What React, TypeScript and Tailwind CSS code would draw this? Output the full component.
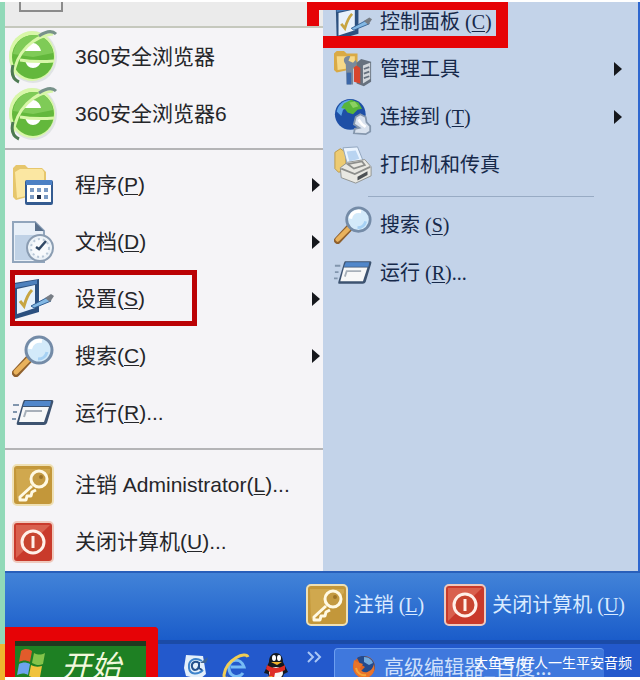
import React from 'react';

interface IconProps {
  className?: string;
}

interface MenuEntry {
  text: string;
  hotkey?: string;
  suffix?: string;
  icon: React.FC<IconProps>;
  submenu?: boolean;
  highlighted?: boolean;
}

const BrowserIcon: React.FC<IconProps> = ({ className }) => (
  <svg className={className} viewBox="0 0 50 56" aria-hidden="true">
    <ellipse cx="25" cy="28" rx="24" ry="26" fill="#dfe3e4" />
    <ellipse cx="24" cy="27" rx="23" ry="25" fill="#d8f7a8" />
    <ellipse cx="25" cy="28" rx="21" ry="22" fill="#63b83c" />
    <path d="M5 25C7 12 16 6 26 6c10 0 18 8 19 18L25 28z" fill="#7fcb57" />
    <path d="M16 22c2-5 6-8 9-8s7 3 8 8z" fill="#fff" />
    <path d="M17 31h17c-2 5-5 8-9 8s-7-3-8-8z" fill="#fff" />
    <path d="M12 31c12 2 22 2 34 1" fill="none" stroke="#d8f7a8" strokeWidth="3" />
    <path d="M45 5C26 7 8 22 5 48" fill="none" stroke="#d8f7a8" strokeWidth="3" />
    <path d="M31 7c6-4 13-6 17-2" fill="none" stroke="#78928a" strokeWidth="3" />
    <path d="M5 36c-2 8-1 14 6 17" fill="none" stroke="#4d7a52" strokeWidth="3" />
  </svg>
);

const ProgramsIcon: React.FC<IconProps> = ({ className }) => (
  <svg className={className} viewBox="0 0 42 42" aria-hidden="true">
    <path d="M1 4l3-3h9l3 3h14l4 4v20l-30 8-3-3z" fill="#e6c66c" />
    <path d="M3 8l5-3h22l2 3v20L5 34z" fill="#fbe7a2" />
    <rect x="13" y="16" width="28" height="25" rx="2" fill="#345b91" />
    <rect x="15" y="21" width="24" height="17" fill="#fff" />
    <rect x="14" y="16" width="26" height="5" fill="#4c80c4" />
    <path d="M18 24h4v4h-4zM25 24h4v4h-4zM32 24h4v4h-4zM18 31h4v4h-4zM32 31h4v4h-4z" fill="#7b9bc4" />
    <path d="M25 31h4v4h-4z" fill="#1c2c48" />
  </svg>
);

const DocumentsIcon: React.FC<IconProps> = ({ className }) => (
  <svg className={className} viewBox="0 0 42 42" aria-hidden="true">
    <path d="M1 1h22l9 9v31H1z" fill="#e9f0f8" stroke="#91a5bc" strokeWidth="2" />
    <path d="M3 14h27v25H3z" fill="#c0d2e6" />
    <path d="M23 1v9h9z" fill="#59708c" />
    <circle cx="28" cy="27" r="13" fill="#edf3f8" stroke="#8b9db2" strokeWidth="2" />
    <circle cx="28" cy="27" r="9" fill="#f8fafc" stroke="#b9c8d7" strokeDasharray="2 3" strokeWidth="2" />
    <path d="M34 20l-7 8-3-2" fill="none" stroke="#314966" strokeWidth="2.5" />
  </svg>
);

const SettingsIcon: React.FC<IconProps> = ({ className }) => (
  <svg className={className} viewBox="0 0 42 42" aria-hidden="true">
    <path d="M2 5L27 1v33L3 41z" fill="#2c507f" />
    <path d="M3 6l22-4v4L3 10z" fill="#4d80bd" />
    <path d="M5 11l18-4v23L5 36z" fill="#e7f1fc" />
    <path d="M8 23l4 5c2-7 4-12 8-16" fill="none" stroke="#c7a542" strokeWidth="3" />
    <path d="M19 28l17-9 3 4-17 7z" fill="#83b8e4" stroke="#315f94" />
    <path d="M33 20l6-4 3 2-4 6z" fill="#777d85" />
  </svg>
);

const SearchIcon: React.FC<IconProps> = ({ className }) => (
  <svg className={className} viewBox="0 0 42 42" aria-hidden="true">
    <path d="M4 38l13-14" stroke="#8f602d" strokeWidth="8" strokeLinecap="round" />
    <path d="M4 37l12-12" stroke="#e9b25c" strokeWidth="5" strokeLinecap="round" />
    <circle cx="27" cy="15" r="13" fill="#d3eafa" stroke="#748ba7" strokeWidth="3" />
    <path d="M18 14c1-6 6-9 12-8" fill="none" stroke="#fff" strokeWidth="4" />
    <path d="M35 17c-1 4-4 7-9 7" fill="none" stroke="#a6d1f4" strokeWidth="3" />
  </svg>
);

const RunIcon: React.FC<IconProps> = ({ className }) => (
  <svg className={className} viewBox="0 0 42 42" aria-hidden="true">
    <path d="M12 8h28q2 0 1 3l-6 20q-1 2-3 2H6q-2 0-1-3l6-20z" fill="#3d5370" />
    <path d="M13 9h26l-1 5H11z" fill="#5187ca" />
    <path d="M11 15h26l-5 15H7z" fill="#f7f8f8" />
    <path d="M12 25l2-6h16" fill="none" stroke="#a7b0b9" strokeWidth="2" />
    <path d="M1 13h6M1 20h4M0 27h4" stroke="#8195ad" strokeWidth="2" />
  </svg>
);

const LogOffIcon: React.FC<IconProps> = ({ className }) => (
  <svg className={className} viewBox="0 0 42 42" aria-hidden="true">
    <rect x="1" y="1" width="40" height="40" rx="4" fill="#c3973a" stroke="#efe0b4" strokeWidth="2" />
    <path d="M4 5h34v4L5 35z" fill="#d8b45c" opacity="0.6" />
    <path d="M20 22L8 33v3h6l1-4h4l1-4 4-2" fill="#c3973a" stroke="#fff9e3" strokeWidth="3" strokeLinejoin="round" />
    <circle cx="27" cy="15" r="8" fill="#c39a42" stroke="#fff9e3" strokeWidth="3" />
    <circle cx="29" cy="13" r="2" fill="#9c7428" />
  </svg>
);

const PowerIcon: React.FC<IconProps> = ({ className }) => (
  <svg className={className} viewBox="0 0 42 42" aria-hidden="true">
    <rect x="1" y="1" width="40" height="40" rx="4" fill="#c93a2b" stroke="#efc9bd" strokeWidth="2" />
    <path d="M4 4h34L4 37z" fill="#e0705c" opacity="0.7" />
    <circle cx="21" cy="21" r="11" fill="#c8452f" stroke="#fff1e9" strokeWidth="3" />
    <path d="M21 15v12" stroke="#fff1e9" strokeWidth="3" />
  </svg>
);

const ToolsIcon: React.FC<IconProps> = ({ className }) => (
  <svg className={className} viewBox="0 0 42 42" aria-hidden="true">
    <path d="M0 4l3-3h8l3 3h12v16L3 25l-3-3z" fill="#d9aa45" />
    <path d="M3 7h20v12L4 22z" fill="#f6d989" />
    <path d="M13 16c-5-6 0-11 5-9l-2 5 5 2 3-3c3 5 0 8-3 9v18h-7z" fill="#79899c" />
    <path d="M14 25h5v13h-5z" fill="#3c67a8" />
    <path d="M25 14l5-4 11 3v22l-8 5-8-3z" fill="#66717e" />
    <path d="M32 17l8-3v18l-8 5z" fill="#d2d7dc" />
    <path d="M33 21l6-2M33 26l6-2M33 31l6-2" stroke="#66717e" strokeWidth="2" />
    <path d="M22 19l3-2 4 3v17l-7-2z" fill="#d8452d" />
  </svg>
);

const NetworkIcon: React.FC<IconProps> = ({ className }) => (
  <svg className={className} viewBox="0 0 42 42" aria-hidden="true">
    <circle cx="18" cy="18" r="17" fill="#1e4fa6" />
    <path d="M3 15C5 6 12 2 19 2l-2 8-7 3-2 7z" fill="#5ea4e6" />
    <path d="M11 6l8-4 8 3 4 7-5 1-5 5-6-2-3-4-4-1z" fill="#58b53a" />
    <path d="M17 5l6-1 4 5-6 2z" fill="#8bd162" />
    <path d="M24 21l5-3 6 3 1 6 4 4v6l-5 3-13-1 1-5 5-1-6-4z" fill="#d9e2ee" stroke="#8597ad" strokeWidth="2" />
    <path d="M27 24l4 5 4 3" fill="none" stroke="#fff" strokeWidth="3" />
  </svg>
);

const PrinterIcon: React.FC<IconProps> = ({ className }) => (
  <svg className={className} viewBox="0 0 42 42" aria-hidden="true">
    <path d="M1 7l6-4 6 4v20l-8 2-4-4z" fill="#edcb72" stroke="#b99645" />
    <path d="M10 2l16-1 6 15-17 5z" fill="#eaf4ff" stroke="#8da2bb" />
    <path d="M14 6l10-1 4 9-11 3z" fill="#b9d4f1" />
    <path d="M7 24l8-6 19-3 7 8v10l-17 8-16-6z" fill="#e9e8e2" stroke="#8d8e8b" />
    <path d="M8 25l15 6 17-8M15 20l16-3 3 4-12 4z" fill="none" stroke="#8d8e8b" strokeWidth="2" />
    <path d="M26 34l11-6v4l-11 6z" fill="#4d5154" />
  </svg>
);

const WindowsFlag: React.FC<IconProps> = ({ className }) => (
  <svg className={className} viewBox="0 0 30 30" aria-hidden="true">
    <path d="M4 3c4-3 8-2 11 0l-2 11c-4-2-7-2-11 0z" fill="#e25b2b" />
    <path d="M17 5c4 2 7 2 11 0l-2 11c-4 2-7 1-11-1z" fill="#84c44a" />
    <path d="M2 16c4-2 7-2 11 0l-2 11c-3-2-7-2-11 0z" fill="#6da4ef" />
    <path d="M14 17c4 2 7 2 11 1l-2 11c-4 1-7 1-11-1z" fill="#f0c33c" />
  </svg>
);

const MailIcon: React.FC<IconProps> = ({ className }) => (
  <svg className={className} viewBox="0 0 28 28" aria-hidden="true">
    <path d="M4 3l17 1 3 18-6 5-14-3-2-8z" fill="#e3effa" />
    <path d="M20 9c-8-5-14 0-13 7s9 7 14 2" fill="none" stroke="#3d83cb" strokeWidth="2" />
    <path d="M17 11c-4-3-8 0-7 4s6 4 7-1v-4 6l3 2" fill="none" stroke="#24518c" strokeWidth="2" />
    <path d="M18 11l8-6-2 6z" fill="#42658f" />
  </svg>
);

const ExplorerIcon: React.FC<IconProps> = ({ className }) => (
  <svg className={className} viewBox="0 0 28 28" aria-hidden="true">
    <path d="M21 21c-4 6-14 4-14-5s12-11 15-1H9" fill="none" stroke="#77bcf5" strokeWidth="3" />
    <path d="M26 5C24-1 4 7 2 23c0 3 1 4 4 3" fill="none" stroke="#f0cd55" strokeWidth="3" />
  </svg>
);

const PenguinIcon: React.FC<IconProps> = ({ className }) => (
  <svg className={className} viewBox="0 0 28 28" aria-hidden="true">
    <path d="M7 10C7-2 21-2 21 10l5 10-4 2-2 5H8l-2-5-4-1z" fill="#15191f" />
    <ellipse cx="14" cy="21" rx="7" ry="6" fill="#f7f7f4" />
    <ellipse cx="12" cy="6" rx="2" ry="3" fill="#fff" />
    <ellipse cx="17" cy="6" rx="2" ry="3" fill="#fff" />
    <path d="M9 10h11l-5 3z" fill="#f2b32c" />
    <path d="M5 13c6 4 12 4 18 0v5c-4 2-7 3-10 3l-1 5-5-1 1-5-4-3z" fill="#df2d26" />
    <path d="M4 25l6-1 3 4H5zM18 25l6 1v2h-8z" fill="#eeb32e" />
  </svg>
);

const FirefoxIcon: React.FC<IconProps> = ({ className }) => (
  <svg className={className} viewBox="0 0 24 24" aria-hidden="true">
    <circle cx="12" cy="12" r="11" fill="#df6422" />
    <path d="M5 3c7-5 17 0 18 8 0 4-2 7-4 8-4 2-9 1-10-3l4-4-5-3z" fill="#234a8c" />
    <path d="M12 2c5 0 8 3 9 6l-4 2-5-3z" fill="#72a9dc" />
    <path d="M2 5l3 2 6 2-3 4c1 5 7 5 9 3 3-1 4-4 5-7 2 8-3 14-10 14S0 17 2 5z" fill="#e9742b" />
    <path d="M4 13c1 5 5 8 10 7" fill="none" stroke="#f5a63c" strokeWidth="2" />
  </svg>
);

const Arrow: React.FC = () => (
  <svg className="h-[14px] w-2 shrink-0" viewBox="0 0 8 14" aria-hidden="true">
    <path d="M0 0l8 7-8 7z" fill="#16181d" />
  </svg>
);

const Label: React.FC<{ entry: MenuEntry; spaced?: boolean }> = ({ entry, spaced }) => (
  <span className="whitespace-nowrap">
    {entry.text}
    {entry.hotkey && (
      <>
        {spaced ? ' (' : '('}
        <span className="underline decoration-1 underline-offset-2">{entry.hotkey}</span>)
      </>
    )}
    {entry.suffix}
  </span>
);

const menuGroups: MenuEntry[][] = [
  [
    { text: '360安全浏览器', icon: BrowserIcon },
    { text: '360安全浏览器6', icon: BrowserIcon },
  ],
  [
    { text: '程序', hotkey: 'P', icon: ProgramsIcon, submenu: true },
    { text: '文档', hotkey: 'D', icon: DocumentsIcon, submenu: true },
    { text: '设置', hotkey: 'S', icon: SettingsIcon, submenu: true, highlighted: true },
    { text: '搜索', hotkey: 'C', icon: SearchIcon, submenu: true },
    { text: '运行', hotkey: 'R', suffix: '...', icon: RunIcon },
  ],
  [
    { text: '注销 Administrator', hotkey: 'L', suffix: '...', icon: LogOffIcon },
    { text: '关闭计算机', hotkey: 'U', suffix: '...', icon: PowerIcon },
  ],
];

const systemGroups: MenuEntry[][] = [
  [
    { text: '控制面板', hotkey: 'C', icon: SettingsIcon, highlighted: true },
    { text: '管理工具', icon: ToolsIcon, submenu: true },
    { text: '连接到', hotkey: 'T', icon: NetworkIcon, submenu: true },
    { text: '打印机和传真', icon: PrinterIcon },
  ],
  [
    { text: '搜索', hotkey: 'S', icon: SearchIcon },
    { text: '运行', hotkey: 'R', suffix: '...', icon: RunIcon },
  ],
];

const footerEntries: MenuEntry[] = [
  { text: '注销', hotkey: 'L', icon: LogOffIcon },
  { text: '关闭计算机', hotkey: 'U', icon: PowerIcon },
];

const quickLaunch = [
  { name: 'Outlook Express', icon: MailIcon },
  { name: 'Internet Explorer', icon: ExplorerIcon },
  { name: 'QQ', icon: PenguinIcon },
];

const StartMenu: React.FC = () => (
  <nav className="relative z-10 border-t-2 border-[#c5c8bd] bg-[#f5f4f7] font-['Liberation_Sans','Noto_Sans_CJK_SC',sans-serif] text-[21px] leading-6 text-[#25262a]">
    {menuGroups.map((group, i) => (
      <ul
        key={i}
        className={i === 0 ? 'pb-[6px]' : 'border-t-2 border-[#b4b4b6] pt-[6px] pb-[7px] last:pb-px'}
      >
        {group.map((entry) => (
          <li key={entry.text} className="relative">
            <button type="button" className="flex h-[57px] w-full items-center gap-[14px] pr-[3px] text-left">
              <span className="flex w-14 shrink-0 justify-center">
                <entry.icon className={entry.icon === BrowserIcon ? 'h-14 w-[50px]' : 'size-[42px]'} />
              </span>
              <span className="flex-1">
                <Label entry={entry} />
              </span>
              {entry.submenu && <Arrow />}
            </button>
            {entry.highlighted && (
              <span className="pointer-events-none absolute top-0 left-[5px] h-14 w-[187px] border-5 border-[#bb0205]" />
            )}
          </li>
        ))}
      </ul>
    ))}
  </nav>
);

const SystemMenu: React.FC = () => (
  <nav className="relative flex-1 border-r-2 border-[#2e67cf] bg-[#c3d3e9] font-['Liberation_Serif','Noto_Sans_CJK_SC',serif] text-xl leading-6 text-[#16294a]">
    {systemGroups.map((group, i) => (
      <ul key={i}>
        {i > 0 && (
          <li className="mt-[7px] mr-11 mb-1 ml-[45px] h-px bg-[#98abc4]" role="separator" />
        )}
        {group.map((entry) => (
          <li key={entry.text}>
            {entry.highlighted && (
              <span className="pointer-events-none absolute top-0 -left-4 h-[46px] w-[201px] border-x-[12px] border-t-8 border-b-[12px] border-[#e60306]" />
            )}
            <button
              type="button"
              className={`flex w-full items-center gap-2 pr-4 pl-[11px] text-left ${entry.highlighted ? 'h-[43px] pb-[3px]' : 'h-12'}`}
            >
              <entry.icon className="size-[38px] shrink-0" />
              <span className="flex-1">
                <Label entry={entry} spaced />
              </span>
              {entry.submenu && <Arrow />}
            </button>
          </li>
        ))}
      </ul>
    ))}
  </nav>
);

const Taskbar: React.FC = () => (
  <div className="relative flex h-[33px] items-stretch bg-[#2359cc]">
    <div className="relative w-[153px]">
      <button
        type="button"
        className="flex h-full w-full items-start gap-[14px] overflow-hidden bg-[#1e8023] pt-1 pl-3 font-['Noto_Sans_CJK_SC',sans-serif] text-[30px] leading-8 text-[#f1f8dc] italic"
      >
        <WindowsFlag className="size-[30px] shrink-0" />
        开始
      </button>
      <span className="pointer-events-none absolute right-0 bottom-0 left-0 h-[50px] rounded-tr-sm border-x-[10px] border-t-[14px] border-r-[12px] border-[#e60306]">
        <span className="block h-[5px] bg-[#20391f]" />
      </span>
    </div>
    <div className="flex items-start gap-3 overflow-hidden pt-2 pl-6">
      {quickLaunch.map((item) => (
        <button key={item.name} type="button" aria-label={item.name}>
          <item.icon className="size-7" />
        </button>
      ))}
    </div>
    <button type="button" aria-label="更多" className="mt-[5px] ml-4 h-4 w-4">
      <svg viewBox="0 0 16 16" fill="none" stroke="#a9c6f5" strokeWidth="2" aria-hidden="true">
        <path d="M2 3l5 5-5 5M9 3l5 5-5 5" />
      </svg>
    </button>
    <button
      type="button"
      className="mt-1 mr-9 ml-3 flex min-w-0 flex-1 items-start gap-2 overflow-hidden rounded-t border-t border-l border-[#6c9ef0] bg-[#3f78dd] pt-[6px] pl-[17px] font-['Noto_Sans_CJK_SC',sans-serif] text-xl leading-6 text-[#cfe0fb]"
    >
      <FirefoxIcon className="size-6 shrink-0" />
      <span className="whitespace-nowrap">高级编辑器_百度...</span>
    </button>
    <span className="absolute right-2 bottom-1 font-['Liberation_Sans','Noto_Sans_CJK_SC',sans-serif] text-sm leading-5 text-white">
      大鱼号/好人一生平安音频
    </span>
  </div>
);

const App: React.FC = () => {
  return (
    <div className="flex bg-white pt-[2px]">
      {/* Desktop edge */}
      <div className="flex w-[5px] shrink-0 flex-col">
        <div className="flex-1 bg-[#91d9b8]" />
        <div className="h-9 bg-[#eeb52f]" />
      </div>

      <div className="min-w-0 flex-1 pb-[3px]">
        <div className="flex">
          <div className="w-[318px] shrink-0">
            <div className="h-6 bg-[#ebebeb] pl-[14px]">
              <div className="h-[10px] w-11 border-2 border-t-0 border-[#8b8b8b]" />
            </div>
            <StartMenu />
          </div>
          <SystemMenu />
        </div>

        {/* Session buttons */}
        <div className="flex h-[73px] justify-end gap-5 border-t-2 border-b-4 border-t-[#285fba] border-b-[#1b4ba7] bg-linear-to-b from-[#4283d8] to-[#1a5cca] pt-[11px] pr-[15px] font-['Liberation_Serif','Noto_Sans_CJK_SC',serif] text-xl leading-6 text-[#d9eaff]">
          {footerEntries.map((entry) => (
            <button key={entry.text} type="button" className="flex h-[42px] items-center gap-[6px]">
              <entry.icon className="size-[42px] shrink-0" />
              <Label entry={entry} spaced />
            </button>
          ))}
        </div>

        <Taskbar />
      </div>
    </div>
  );
};

export default App;
